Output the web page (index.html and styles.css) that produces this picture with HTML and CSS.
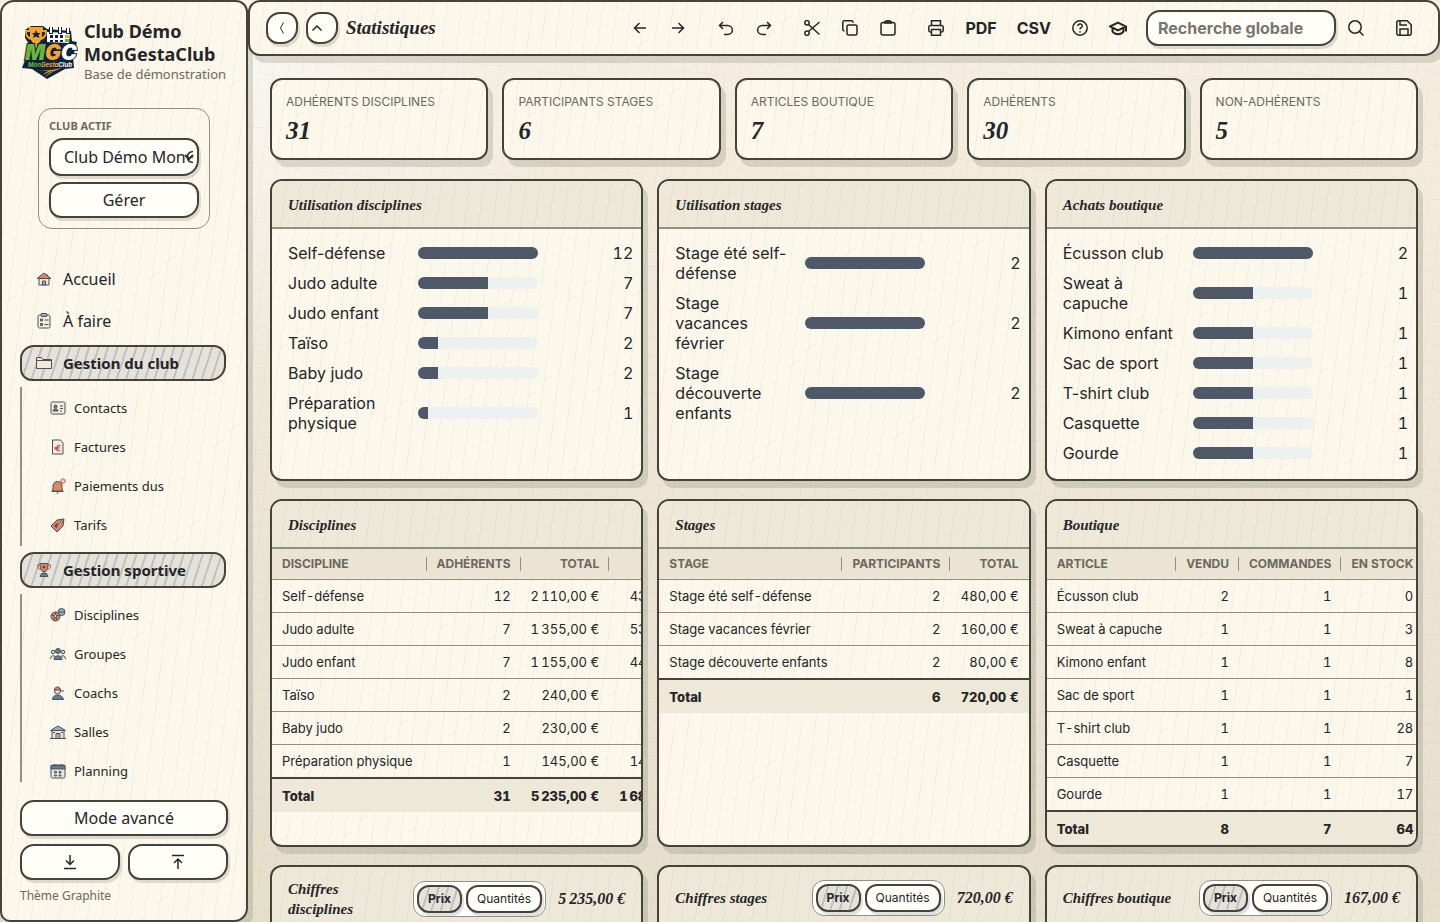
FILE: index.html
```
<!DOCTYPE html>
<html lang="fr">
<head>
    <meta charset="UTF-8">
    <meta name="viewport" content="width=device-width, initial-scale=1.0">
    <title>Statistiques - MonGestaClub</title>
    <link rel="stylesheet" href="styles.css">
</head>
<body>
    <div class="app">
        <aside class="sidebar">
            <div class="brand">
                <svg class="logo" viewBox="0 0 58 58" aria-hidden="true">
                    <path d="M5 8l6-4h12l4 3 24 2 1 10 5 1-4 15 1 11-9 1-18 10-15-10-10-1 3-8 4-16-4-6z" fill="#10243f"/>
                    <path d="M27 10l23 1-1 10-22-1z" fill="#fff"/>
                    <path d="M31 5v7M40 5v7M48 6v6" stroke="#10243f" stroke-width="4"/>
                    <path d="M31 5v6M40 5v6M48 6v5" stroke="#fff" stroke-width="2"/>
                    <path d="M30 13h3v3h-3zM35 13h3v3h-3zM40 13h3v3h-3zM30 18h3v2h-3zM35 18h3v2h-3zM40 18h3v2h-3z" fill="#10243f"/>
                    <path d="M45 13h4v3h-4z" fill="#f3a52c"/>
                    <path d="M45 17h4v3h-4z" fill="#6cb43c"/>
                    <path d="M9 5h14v3h4c0 6-2 9-6 10-1 2-2 3-4 4v3h3v3h-8v-3h3v-3c-2-1-3-2-4-4-4-1-6-4-6-10h4zM7 10c0 3 1 4 3 5v-5zM22 10v5c2-1 3-2 3-5z" fill="#f3a52c"/>
                    <path d="M16 8l1.500 3h3l-2 2 1 3-3.500-1.500-3 1.500 1-3-2-2h3z" fill="#10243f"/>
                    <text class="logo-big" x="5" y="38"><tspan fill="#6cb43c">M</tspan><tspan fill="#f3a52c">G</tspan><tspan fill="#fff">C</tspan></text>
                    <text class="logo-small" x="8" y="45"><tspan fill="#6cb43c">Mon</tspan><tspan fill="#f3a52c">Gesta</tspan><tspan fill="#fff">Club</tspan></text>
                    <path d="M17 49c8 0 16-1 25-3-7 2-12 5-17 9 3-4 6-5 10-7-6 2-9 3-12 5 1-2 3-3 6-4z" fill="#f3a52c"/>
                </svg>
                <div class="brand-text">
                    <strong>Club Démo MonGestaClub</strong>
                    <span>Base de démonstration</span>
                </div>
            </div>

            <div class="club-box">
                <label for="club">Club actif</label>
                <div class="select-wrap">
                    <select id="club">
                        <option>Club Démo MonGestaClub</option>
                    </select>
                    <svg class="chevron" viewBox="0 0 10 6" aria-hidden="true"><path d="M1 1l4 4 4-4"/></svg>
                </div>
                <button type="button" class="btn">Gérer</button>
            </div>

            <nav class="nav">
                <a href="#" class="nav-item">
                    <svg class="ico" viewBox="0 0 16 16"><path d="M3 8v6h10V8" fill="#ece7dc"/><path d="M1 7.500L8 2l7 5.500z" fill="#e2845c"/><path d="M11 3v2" /><path d="M6.500 14v-4h3v4z" fill="#8fadc4"/></svg>
                    Accueil
                </a>
                <a href="#" class="nav-item">
                    <svg class="ico" viewBox="0 0 16 16"><rect x="2" y="2" width="12" height="13" rx="1.500" fill="#f4efe2"/><rect x="5" y="0.500" width="6" height="3" rx="1" fill="#8fadc4"/><path d="M4.500 6h2v2h-2zM4.500 10.500h2v2h-2z" fill="#9dbb7f"/><path d="M8.500 7h4M8.500 11.500h4"/></svg>
                    À faire
                </a>
                <a href="#" class="nav-item active">
                    <svg class="ico" viewBox="0 0 16 16"><path d="M0.500 13.500v-11h5l1.500 2h8.500v9z" fill="#f1e8d8"/><path d="M0.500 5.500h15"/></svg>
                    Gestion du club
                </a>
                <div class="subnav">
                    <a href="#">
                        <svg class="ico" viewBox="0 0 16 16"><rect x="1" y="2" width="14" height="12" rx="1.500" fill="#f4efe2"/><circle cx="5.500" cy="6.500" r="1.500" fill="#5b7f9c"/><path d="M3 11c0-3 5-3 5 0z" fill="#5b7f9c"/><path d="M10 6h3M10 8.500h3M10 11h2"/></svg>
                        Contacts
                    </a>
                    <a href="#">
                        <svg class="ico" viewBox="0 0 16 16"><path d="M2.500 1h8L13 4v11H2.500z" fill="#f4efe2"/><path d="M10.500 6.500c-4-1-5 4-3 5 1 .5 2 .5 3 0M4.500 8.500h5M4.500 10h4" stroke="#d9534a" stroke-width="1.300"/></svg>
                        Factures
                    </a>
                    <a href="#">
                        <svg class="ico" viewBox="0 0 16 16"><path d="M2 13c1-1 1-3 1-5 0-6 9-6 9 0 0 2 0 4 1 5z" fill="#e2845c"/><path d="M1.500 13.500h12M6.500 15h2"/><circle cx="13" cy="3" r="2.200" fill="#f6d8cc" stroke="#c95545"/></svg>
                        Paiements dus
                    </a>
                    <a href="#">
                        <svg class="ico" viewBox="0 0 16 16"><path d="M1 9l6-6 7-1-1 7-6 6z" fill="#e2845c"/><circle cx="11.500" cy="4.500" r="1" fill="#fff"/><path d="M8.500 7c-3-.5-4 3-1.500 3.500M4.500 8.500h3" stroke-width="1.400"/></svg>
                        Tarifs
                    </a>
                </div>
                <a href="#" class="nav-item active">
                    <svg class="ico" viewBox="0 0 16 16"><path d="M4 3H1.500c0 3 1 4 3 4.500M12 3h2.500c0 3-1 4-3 4.500" stroke="#b5553a" fill="none"/><path d="M4 1.500h8c0 5-1 8-4 8s-4-3-4-8z" fill="#e2845c"/><path d="M8 9.500v2"/><path d="M5.500 11.500h5l1.500 3H4z" fill="#5b7f9c"/><circle cx="8" cy="5" r="1" fill="#333"/></svg>
                    Gestion sportive
                </a>
                <div class="subnav">
                    <a href="#">
                        <svg class="ico" viewBox="0 0 16 16"><circle cx="11.500" cy="5" r="3.500" fill="#8fadc4"/><path d="M8.500 5h6"/><circle cx="5.500" cy="9.500" r="4.500" fill="#e2845c"/><path d="M4 8.500l1.500-1 1.500 1-.5 2h-2z" fill="#fff"/><path d="M5.500 5v2.500M1.500 8.500H4M7 8.500h2.500M4 13l.5-2.500M7 13l-.5-2.500"/></svg>
                        Disciplines
                    </a>
                    <a href="#">
                        <svg class="ico" viewBox="0 0 16 16"><circle cx="3" cy="6" r="1.800" fill="#e8d5b0"/><circle cx="13" cy="6" r="1.800" fill="#e8d5b0"/><path d="M0.500 13c0-4 4-4 5-2M15.500 13c0-4-4-4-5-2" fill="#e8d5b0"/><circle cx="8" cy="5" r="2.500" fill="#5b7f9c"/><path d="M4 13.500c0-5 8-5 8 0z" fill="#5b7f9c"/></svg>
                        Groupes
                    </a>
                    <a href="#">
                        <svg class="ico" viewBox="0 0 16 16"><circle cx="7.500" cy="6" r="3" fill="#f2dcc0"/><path d="M4.500 5c0-4 6-4 6 0z" fill="#e2845c"/><path d="M10 6h4"/><path d="M2.500 14.500c0-6 10-6 11 0z" fill="#5b7f9c"/></svg>
                        Coachs
                    </a>
                    <a href="#">
                        <svg class="ico" viewBox="0 0 16 16"><path d="M2 6.500v8h12v-8z" fill="#ece7dc"/><path d="M0.500 6.500L8 2l7.500 4.500z" fill="#8fadc4"/><path d="M6 14.500v-5h4v5zM8 9.500v5M3 8.500h2M11 8.500h2M0 14.500h16"/></svg>
                        Salles
                    </a>
                    <a href="#">
                        <svg class="ico" viewBox="0 0 16 16"><rect x="1" y="2" width="14" height="13" rx="1.500" fill="#ece7dc"/><path d="M1 2.500h14V6H1z" fill="#5b7f9c"/><path d="M4.500 1v2M11.500 1v2M4.500 8.500h2v1.500h-2zM9 8.500h2v1.500H9zM4.500 12h2v1h-2zM9 12h2v1H9z"/></svg>
                        Planning
                    </a>
                </div>
            </nav>

            <div class="sidebar-footer">
                <button type="button" class="btn">Mode avancé</button>
                <button type="button" class="btn" aria-label="Importer">
                    <svg class="line" viewBox="0 0 16 16"><path d="M8 1v9M4 6.500l4 4 4-4M2 14.500h12"/></svg>
                </button>
                <button type="button" class="btn" aria-label="Exporter">
                    <svg class="line" viewBox="0 0 16 16"><path d="M8 15V5M4 9l4-4 4 4M2 1.500h12"/></svg>
                </button>
                <p class="theme">Thème Graphite</p>
            </div>
        </aside>

        <main class="main">
            <header class="topbar">
                <button type="button" class="btn square" aria-label="Réduire">
                    <svg class="thin" viewBox="0 0 16 16"><path d="M9.500 2.500L6.500 8l3 5.500"/></svg>
                </button>
                <button type="button" class="btn square up" aria-label="Monter">
                    <svg class="line" viewBox="0 0 16 16"><path d="M3.500 10.500l4.500-4.500 4.500 4.500"/></svg>
                </button>
                <h1>Statistiques</h1>

                <div class="tools">
                    <button type="button" class="tool" aria-label="Précédent"><svg class="line" viewBox="0 0 16 16"><path d="M14 8H2.500M7.500 3l-5 5 5 5"/></svg></button>
                    <button type="button" class="tool" aria-label="Suivant"><svg class="line" viewBox="0 0 16 16"><path d="M2 8h11.500M8.500 3l5 5-5 5"/></svg></button>
                    <button type="button" class="tool spaced" aria-label="Annuler"><svg class="line" viewBox="0 0 16 16"><path d="M5 2L1.500 5.500 5 9M1.500 5.500h8c6.500 0 6.500 9 0 9H6"/></svg></button>
                    <button type="button" class="tool" aria-label="Rétablir"><svg class="line" viewBox="0 0 16 16"><path d="M11 2l3.500 3.500L11 9M14.500 5.500h-8c-6.500 0-6.500 9 0 9H10"/></svg></button>
                    <button type="button" class="tool spaced" aria-label="Couper"><svg class="line" viewBox="0 0 16 16"><circle cx="3" cy="2.800" r="2.200"/><circle cx="3" cy="13.200" r="2.200"/><path d="M15.500 2L4.500 11.500M4.500 4.500l11 10"/></svg></button>
                    <button type="button" class="tool" aria-label="Copier"><svg class="line" viewBox="0 0 16 16"><rect x="5" y="5" width="10" height="10" rx="1.500"/><path d="M2.500 11H2.200A1.500 1.500 0 0 1 .8 9.500V2.200A1.500 1.500 0 0 1 2.200.8h7.300A1.500 1.500 0 0 1 11 2.200v.5"/></svg></button>
                    <button type="button" class="tool" aria-label="Coller"><svg class="line" viewBox="0 0 16 16"><rect x="1" y="2.500" width="14" height="12.500" rx="2"/><path d="M4.500 3c0-3 7-3 7 0z" fill="#46423a"/></svg></button>
                    <button type="button" class="tool spaced" aria-label="Imprimer"><svg class="line" viewBox="0 0 16 16"><path d="M3.500 5.500V.8h9v4.700M3.500 12H2.200A1.500 1.500 0 0 1 .8 10.500V7a1.500 1.500 0 0 1 1.400-1.500h11.600A1.500 1.500 0 0 1 15.200 7v3.500a1.500 1.500 0 0 1-1.400 1.500h-1.300"/><path d="M3.500 9.500h9v5.700h-9z"/></svg></button>
                    <button type="button" class="tool text">PDF</button>
                    <button type="button" class="tool text">CSV</button>
                    <button type="button" class="tool" aria-label="Aide"><svg class="line" viewBox="0 0 16 16"><circle cx="8" cy="8" r="7.200"/><path d="M5.800 6c.3-2.800 4.600-2.500 4.500 0 0 1.500-2.300 1.600-2.300 3.200M8 11.300v1.200"/></svg></button>
                    <button type="button" class="tool" aria-label="Formation"><svg class="line cap" viewBox="0 0 18 16"><path d="M1 6.500l8-4 8 4-8 4zM3.500 8v3.500c2 3.500 9 3.500 11 0V8M17 6.500v5"/></svg></button>
                </div>

                <input type="search" class="search" placeholder="Recherche globale" aria-label="Recherche globale">
                <div class="tools end">
                    <button type="button" class="tool" aria-label="Rechercher"><svg class="line" viewBox="0 0 16 16"><circle cx="7" cy="7" r="6.200"/><path d="M11.500 11.500l4 4"/></svg></button>
                    <button type="button" class="tool" aria-label="Enregistrer"><svg class="line" viewBox="0 0 16 16"><path d="M2.200.8h9l4 4v9a1.500 1.500 0 0 1-1.400 1.400H2.200a1.500 1.500 0 0 1-1.400-1.400V2.200A1.500 1.500 0 0 1 2.200.8z"/><path d="M4 15V9h8v6M4 1v4h7"/></svg></button>
                </div>
            </header>

            <div class="content">
                <section class="stats">
                    <div class="card stat"><span>Adhérents disciplines</span><strong>31</strong></div>
                    <div class="card stat"><span>Participants stages</span><strong>6</strong></div>
                    <div class="card stat"><span>Articles boutique</span><strong>7</strong></div>
                    <div class="card stat"><span>Adhérents</span><strong>30</strong></div>
                    <div class="card stat"><span>Non-adhérents</span><strong>5</strong></div>
                </section>

                <section class="grid">
                    <article class="card">
                        <h2>Utilisation disciplines</h2>
                        <div class="bars">
                            <span>Self-défense</span><div class="bar"><i style="width:100%"></i></div><b>12</b>
                            <span>Judo adulte</span><div class="bar"><i style="width:58%"></i></div><b>7</b>
                            <span>Judo enfant</span><div class="bar"><i style="width:58%"></i></div><b>7</b>
                            <span>Taïso</span><div class="bar"><i style="width:17%"></i></div><b>2</b>
                            <span>Baby judo</span><div class="bar"><i style="width:17%"></i></div><b>2</b>
                            <span>Préparation physique</span><div class="bar"><i style="width:8%"></i></div><b>1</b>
                        </div>
                    </article>
                    <article class="card">
                        <h2>Utilisation stages</h2>
                        <div class="bars">
                            <span>Stage été self-défense</span><div class="bar"><i style="width:100%"></i></div><b>2</b>
                            <span>Stage vacances février</span><div class="bar"><i style="width:100%"></i></div><b>2</b>
                            <span>Stage découverte enfants</span><div class="bar"><i style="width:100%"></i></div><b>2</b>
                        </div>
                    </article>
                    <article class="card">
                        <h2>Achats boutique</h2>
                        <div class="bars">
                            <span>Écusson club</span><div class="bar"><i style="width:100%"></i></div><b>2</b>
                            <span>Sweat à capuche</span><div class="bar"><i style="width:50%"></i></div><b>1</b>
                            <span>Kimono enfant</span><div class="bar"><i style="width:50%"></i></div><b>1</b>
                            <span>Sac de sport</span><div class="bar"><i style="width:50%"></i></div><b>1</b>
                            <span>T-shirt club</span><div class="bar"><i style="width:50%"></i></div><b>1</b>
                            <span>Casquette</span><div class="bar"><i style="width:50%"></i></div><b>1</b>
                            <span>Gourde</span><div class="bar"><i style="width:50%"></i></div><b>1</b>
                        </div>
                    </article>

                    <article class="card">
                        <h2>Disciplines</h2>
                        <table>
                            <thead>
                                <tr><th>Discipline</th><th>Adhérents</th><th>Total</th><th>Payé</th></tr>
                            </thead>
                            <tbody>
                                <tr><td>Self-défense</td><td>12</td><td>2&#8239;110,00 €</td><td>430,00 €</td></tr>
                                <tr><td>Judo adulte</td><td>7</td><td>1&#8239;355,00 €</td><td>535,00 €</td></tr>
                                <tr><td>Judo enfant</td><td>7</td><td>1&#8239;155,00 €</td><td>440,00 €</td></tr>
                                <tr><td>Taïso</td><td>2</td><td>240,00 €</td><td>0,00 €</td></tr>
                                <tr><td>Baby judo</td><td>2</td><td>230,00 €</td><td>0,00 €</td></tr>
                                <tr><td>Préparation physique</td><td>1</td><td>145,00 €</td><td>145,00 €</td></tr>
                            </tbody>
                            <tfoot>
                                <tr><td>Total</td><td>31</td><td>5&#8239;235,00 €</td><td>1&#8239;680,00 €</td></tr>
                            </tfoot>
                        </table>
                    </article>
                    <article class="card">
                        <h2>Stages</h2>
                        <table>
                            <thead>
                                <tr><th>Stage</th><th>Participants</th><th>Total</th></tr>
                            </thead>
                            <tbody>
                                <tr><td>Stage été self-défense</td><td>2</td><td>480,00 €</td></tr>
                                <tr><td>Stage vacances février</td><td>2</td><td>160,00 €</td></tr>
                                <tr><td>Stage découverte enfants</td><td>2</td><td>80,00 €</td></tr>
                            </tbody>
                            <tfoot>
                                <tr><td>Total</td><td>6</td><td>720,00 €</td></tr>
                            </tfoot>
                        </table>
                    </article>
                    <article class="card">
                        <h2>Boutique</h2>
                        <table>
                            <thead>
                                <tr><th>Article</th><th>Vendu</th><th>Commandes</th><th>En stock</th></tr>
                            </thead>
                            <tbody>
                                <tr><td>Écusson club</td><td>2</td><td>1</td><td>0</td></tr>
                                <tr><td>Sweat à capuche</td><td>1</td><td>1</td><td>3</td></tr>
                                <tr><td>Kimono enfant</td><td>1</td><td>1</td><td>8</td></tr>
                                <tr><td>Sac de sport</td><td>1</td><td>1</td><td>1</td></tr>
                                <tr><td>T-shirt club</td><td>1</td><td>1</td><td>28</td></tr>
                                <tr><td>Casquette</td><td>1</td><td>1</td><td>7</td></tr>
                                <tr><td>Gourde</td><td>1</td><td>1</td><td>17</td></tr>
                            </tbody>
                            <tfoot>
                                <tr><td>Total</td><td>8</td><td>7</td><td>64</td></tr>
                            </tfoot>
                        </table>
                    </article>

                    <article class="card figures">
                        <div class="figures-head">
                            <h3>Chiffres disciplines</h3>
                            <div class="toggle"><button type="button" class="on">Prix</button><button type="button">Quantités</button></div>
                            <strong>5&#8239;235,00 €</strong>
                        </div>
                    </article>
                    <article class="card figures">
                        <div class="figures-head">
                            <h3>Chiffres stages</h3>
                            <div class="toggle"><button type="button" class="on">Prix</button><button type="button">Quantités</button></div>
                            <strong>720,00 €</strong>
                        </div>
                    </article>
                    <article class="card figures">
                        <div class="figures-head">
                            <h3>Chiffres boutique</h3>
                            <div class="toggle"><button type="button" class="on">Prix</button><button type="button">Quantités</button></div>
                            <strong>167,00 €</strong>
                        </div>
                    </article>
                </section>
            </div>
        </main>
    </div>
</body>
</html>
```

FILE: styles.css
```
:root {
    --ink: #242628;
    --line: #46423a;
    --soft: #949080;
    --muted: #6c6860;
    --paper: #fbf7eb;
    --shade: #eee8d8;
    --hatch: repeating-linear-gradient(97deg, rgba(70, 66, 58, 0.05) 0 1px, transparent 1px 14px);
    --pencil: repeating-linear-gradient(108deg, rgba(80, 90, 100, 0.24) 0 2px, transparent 2px 9px);
    --script: "Liberation Serif", serif;
}
* {
    box-sizing: border-box;
}
body {
    margin: 0;
    font-family: Inter, sans-serif;
    font-size: 16px;
    line-height: 20px;
    color: var(--ink);
    background: #ece5d4;
}
button, input, select {
    font: inherit;
    color: inherit;
}
.app {
    display: flex;
    height: 100vh;
    overflow: hidden;
    background:
        repeating-linear-gradient(97deg, rgba(70, 66, 58, 0.03) 0 1px, transparent 1px 14px),
        repeating-linear-gradient(187deg, rgba(70, 66, 58, 0.03) 0 1px, transparent 1px 18px),
        radial-gradient(circle at 250px 60px, #f8f6f1, transparent 320px),
        linear-gradient(#f6eee0, #e5decb);
}

/* Barre latérale */
.sidebar {
    display: flex;
    flex-direction: column;
    flex: 0 0 248px;
    padding: 18px 18px 16px;
    border: 2px solid var(--line);
    border-radius: 14px 12px 14px 10px;
    background: var(--hatch), var(--paper);
    box-shadow: 5px 7px 0 rgba(70, 66, 58, 0.16);
    font-family: "Noto Sans", sans-serif;
}
.brand {
    display: flex;
    align-items: center;
    gap: 6px;
}
.logo {
    flex: none;
    width: 58px;
    height: 58px;
}
.logo-big {
    font: italic 900 21px Inter, sans-serif;
    stroke: #10243f;
    stroke-width: 2px;
    paint-order: stroke;
}
.logo-small {
    font: italic 700 6px Inter, sans-serif;
}
.brand-text {
    display: flex;
    flex-direction: column;
    white-space: nowrap;
}
.brand strong {
    font-size: 18px;
    line-height: 23px;
    white-space: normal;
}
.brand-text span {
    font-size: 13px;
    line-height: 16px;
    color: var(--muted);
}
.club-box {
    display: flex;
    flex-direction: column;
    gap: 6px;
    margin: 26px 18px 32px;
    padding: 10px;
    border: 1px solid var(--soft);
    border-radius: 14px;
}
.club-box label {
    font-size: 11px;
    line-height: 13px;
    font-weight: 700;
    text-transform: uppercase;
    color: var(--muted);
}
.btn, .select-wrap select {
    height: 36px;
    border: 2px solid var(--line);
    border-radius: 14px 12px 16px 12px;
    background: #fffef8;
    box-shadow: 2px 3px 0 rgba(70, 66, 58, 0.16);
}
.btn {
    display: flex;
    align-items: center;
    justify-content: center;
    padding: 0;
    cursor: pointer;
}
.select-wrap {
    position: relative;
}
.select-wrap select {
    appearance: none;
    display: block;
    width: 100%;
    height: 38px;
    padding: 0 4px 0 13px;
}
.chevron {
    position: absolute;
    right: 5px;
    top: 16px;
    width: 10px;
    height: 6px;
    fill: none;
    stroke: var(--ink);
    stroke-width: 2;
}
.nav {
    flex: 1;
    min-height: 0;
    overflow: hidden;
}
.nav a {
    display: flex;
    align-items: center;
    color: inherit;
    text-decoration: none;
}
.nav-item {
    gap: 11px;
    width: 206px;
    height: 36px;
    margin-bottom: 6px;
    padding: 0 14px;
    border: 2px solid transparent;
    border-radius: 14px 12px 16px 12px;
}
.nav-item.active {
    border-color: var(--line);
    background: var(--pencil), #e4e2da;
    font-size: 15px;
    font-weight: 700;
}
.ico {
    flex: none;
    width: 16px;
    height: 16px;
    fill: none;
    stroke: #4a5058;
}
.subnav {
    margin-bottom: 6px;
    padding: 1px 0 2px 28px;
    border-left: 2px solid var(--soft);
}
.subnav a {
    gap: 8px;
    height: 39px;
    font-size: 13px;
}
.sidebar-footer {
    display: grid;
    grid-template-columns: 1fr 1fr;
    gap: 8px;
    padding-top: 18px;
}
.sidebar-footer .btn:first-child {
    grid-column: span 2;
}
.theme {
    grid-column: span 2;
    margin: 0;
    font-size: 12px;
    line-height: 16px;
    color: var(--muted);
}
.line, .thin {
    width: 16px;
    height: 16px;
    fill: none;
    stroke: var(--ink);
    stroke-width: 1.5;
}
.thin {
    stroke-width: 1;
}

/* Barre du haut */
.main {
    flex: 1;
    min-width: 0;
}
.topbar {
    display: flex;
    align-items: center;
    height: 56px;
    padding: 0 22px 0 16px;
    border: 2px solid var(--line);
    border-radius: 12px 14px 16px 12px;
    background: var(--hatch), var(--paper);
    box-shadow: 5px 7px 0 rgba(70, 66, 58, 0.16);
}
.square {
    width: 32px;
    height: 32px;
    margin-right: 8px;
}
.square.up {
    justify-content: flex-start;
    padding-left: 1px;
}
h1, h2, h3, .stat strong, .figures strong {
    margin: 0;
    font-family: var(--script);
    font-weight: 700;
    font-style: italic;
}
h1 {
    font-size: 19px;
}
.tools {
    display: flex;
    align-items: center;
    gap: 14px;
    margin-left: auto;
}
.tools.end {
    gap: 24px;
    margin-left: 8px;
}
.tool {
    display: flex;
    align-items: center;
    justify-content: center;
    min-width: 24px;
    height: 32px;
    padding: 0;
    border: 0;
    background: none;
    cursor: pointer;
}
.tool.spaced {
    margin-left: 10px;
}
.tool.text {
    padding: 0 3px;
    font-weight: 700;
}
.line.cap {
    width: 18px;
    stroke-width: 2;
}
.search {
    width: 190px;
    height: 36px;
    margin-left: 16px;
    padding: 0 10px;
    border: 2px solid var(--line);
    border-radius: 14px 12px 16px 12px;
    background: #fffef8;
    box-shadow: 2px 3px 0 rgba(70, 66, 58, 0.16);
    font-weight: 700;
}
.search::placeholder {
    color: #77756f;
}

/* Cartes */
.content {
    display: flex;
    flex-direction: column;
    gap: 19px;
    padding: 22px 22px 0;
}
.stats {
    display: grid;
    grid-template-columns: repeat(5, 1fr);
    gap: 14px;
}
.grid {
    display: grid;
    grid-template-columns: repeat(3, minmax(0, 1fr));
    gap: 18px 14px;
}
.card {
    overflow: hidden;
    border: 2px solid var(--line);
    border-radius: 12px;
    background: var(--hatch), var(--paper);
    box-shadow: 5px 7px 0 rgba(70, 66, 58, 0.16);
}
.stat {
    display: flex;
    flex-direction: column;
    gap: 6px;
    padding: 13px 14px;
}
.stat span {
    font-size: 12px;
    line-height: 18px;
    text-transform: uppercase;
    color: var(--muted);
}
.stat strong {
    font-size: 25px;
    line-height: 28px;
}
h2 {
    height: 48px;
    padding: 14px 16px 12px;
    border-bottom: 2px solid var(--soft);
    background: var(--hatch), var(--shade);
    font-size: 15px;
}
.bars {
    display: grid;
    grid-template-columns: 120px 120px 1fr;
    align-items: center;
    gap: 10px;
    padding: 14px 8px 16px 16px;
}
.bars b {
    font-weight: 400;
    font-variant-numeric: tabular-nums;
    text-align: right;
}
.bar {
    height: 12px;
    overflow: hidden;
    border-radius: 6px;
    background: #ecf0ee;
}
.bar i {
    display: block;
    height: 100%;
    background: #4d5968;
}

/* Tableaux */
table {
    width: 100%;
    border-collapse: separate;
    border-spacing: 0;
    font-size: 13px;
    font-variant-numeric: tabular-nums;
    white-space: nowrap;
}
th, td {
    height: 33px;
    padding: 0 10px;
    border-bottom: 1px solid var(--soft);
    text-align: right;
}
th:first-child, td:first-child {
    padding-right: 14px;
    text-align: left;
}
th {
    position: relative;
    height: 31px;
    background: #ebe4d2;
    font-size: 12px;
    text-transform: uppercase;
    color: var(--muted);
}
th:not(:last-child)::after {
    content: "";
    position: absolute;
    top: 8px;
    right: 0;
    width: 1px;
    height: 14px;
    background: var(--soft);
}
tbody tr:last-child td {
    height: 32px;
    border-bottom: 0;
}
tfoot td {
    height: 35px;
    border-top: 2px solid var(--line);
    border-bottom: 0;
    background: var(--shade);
    font-weight: 800;
}

/* Chiffres */
.figures {
    background: var(--hatch), var(--shade);
}
.figures-head {
    display: flex;
    align-items: center;
    gap: 12px;
    min-height: 62px;
    padding: 12px 16px;
}
.figures h3 {
    flex: 1;
    font-size: 15px;
}
.figures strong {
    font-size: 16px;
    white-space: nowrap;
}
.toggle {
    display: flex;
    gap: 4px;
    padding: 3px;
    border: 1px solid var(--soft);
    border-radius: 12px;
    background: #fff;
}
.toggle button {
    height: 28px;
    padding: 0 9px;
    border: 2px solid var(--line);
    border-radius: 12px;
    background: #fffef8;
    box-shadow: 2px 3px 0 rgba(70, 66, 58, 0.16);
    font-size: 12px;
}
.toggle .on {
    background: var(--pencil), #e4e2da;
    font-weight: 700;
}
```
